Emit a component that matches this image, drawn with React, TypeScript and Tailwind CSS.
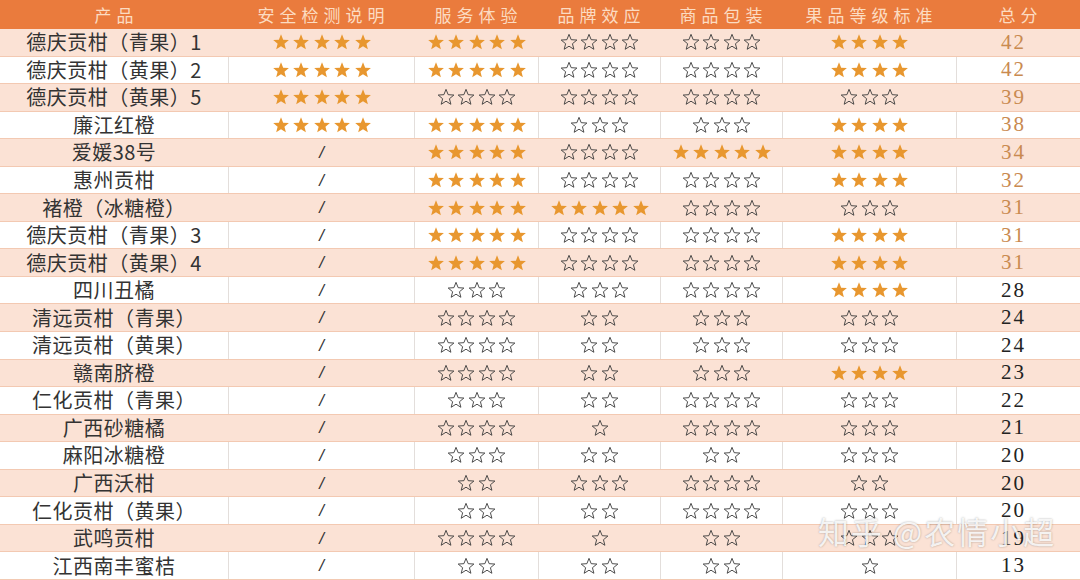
import type { ReactNode } from "react";

type Rating = number | "-";

interface Row {
  name: string;
  safety: Rating;
  service: [number, boolean];
  brand: [number, boolean];
  pack: [number, boolean];
  grade: [number, boolean];
  total: number;
}

// [count, filled]
const rows: Row[] = [
  { name: "德庆贡柑（青果）1", safety: 5, service: [5, true], brand: [4, false], pack: [4, false], grade: [4, true], total: 42 },
  { name: "德庆贡柑（黄果）2", safety: 5, service: [5, true], brand: [4, false], pack: [4, false], grade: [4, true], total: 42 },
  { name: "德庆贡柑（黄果）5", safety: 5, service: [4, false], brand: [4, false], pack: [4, false], grade: [3, false], total: 39 },
  { name: "廉江红橙", safety: 5, service: [5, true], brand: [3, false], pack: [3, false], grade: [4, true], total: 38 },
  { name: "爱媛38号", safety: "-", service: [5, true], brand: [4, false], pack: [5, true], grade: [4, true], total: 34 },
  { name: "惠州贡柑", safety: "-", service: [5, true], brand: [4, false], pack: [4, false], grade: [4, true], total: 32 },
  { name: "褚橙（冰糖橙）", safety: "-", service: [5, true], brand: [5, true], pack: [4, false], grade: [3, false], total: 31 },
  { name: "德庆贡柑（青果）3", safety: "-", service: [5, true], brand: [4, false], pack: [4, false], grade: [4, true], total: 31 },
  { name: "德庆贡柑（黄果）4", safety: "-", service: [5, true], brand: [4, false], pack: [4, false], grade: [4, true], total: 31 },
  { name: "四川丑橘", safety: "-", service: [3, false], brand: [3, false], pack: [4, false], grade: [4, true], total: 28 },
  { name: "清远贡柑（青果）", safety: "-", service: [4, false], brand: [2, false], pack: [3, false], grade: [3, false], total: 24 },
  { name: "清远贡柑（黄果）", safety: "-", service: [4, false], brand: [2, false], pack: [3, false], grade: [3, false], total: 24 },
  { name: "赣南脐橙", safety: "-", service: [4, false], brand: [2, false], pack: [3, false], grade: [4, true], total: 23 },
  { name: "仁化贡柑（青果）", safety: "-", service: [3, false], brand: [2, false], pack: [4, false], grade: [3, false], total: 22 },
  { name: "广西砂糖橘", safety: "-", service: [4, false], brand: [1, false], pack: [4, false], grade: [3, false], total: 21 },
  { name: "麻阳冰糖橙", safety: "-", service: [3, false], brand: [2, false], pack: [2, false], grade: [3, false], total: 20 },
  { name: "广西沃柑", safety: "-", service: [2, false], brand: [3, false], pack: [4, false], grade: [2, false], total: 20 },
  { name: "仁化贡柑（黄果）", safety: "-", service: [2, false], brand: [2, false], pack: [4, false], grade: [3, false], total: 20 },
  { name: "武鸣贡柑", safety: "-", service: [4, false], brand: [1, false], pack: [2, false], grade: [3, false], total: 19 },
  { name: "江西南丰蜜桔", safety: "-", service: [2, false], brand: [2, false], pack: [2, false], grade: [1, false], total: 13 },
];

const headers = ["产品", "安全检测说明", "服务体验", "品牌效应", "商品包装", "果品等级标准", "总分"];

const STAR = "M12 1.8l2.9 7.1 7.6.5-5.9 4.9 1.9 7.4L12 17.6l-6.4 4.1 1.9-7.4L1.6 9.4l7.6-.5z";

function Star({ filled }: { filled: boolean }) {
  return filled ? (
    <svg width="18" height="18" viewBox="0 0 24 24">
      <path d={STAR} fill="#e8972f" />
    </svg>
  ) : (
    <svg width="18" height="18" viewBox="0 0 24 24">
      <path d={STAR} fill="none" stroke="#3a3a3a" strokeWidth="1.2" strokeLinejoin="miter" />
    </svg>
  );
}

function Stars({ n, filled }: { n: number; filled: boolean }) {
  return (
    <div className="flex items-center gap-[2.5px]">
      {Array.from({ length: n }).map((_, i) => (
        <Star key={i} filled={filled} />
      ))}
    </div>
  );
}

function Cell({ children, striped, first }: { children: ReactNode; striped: boolean; first?: boolean }) {
  return (
    <div
      className={`flex items-center justify-center h-full ${
        first ? "" : striped ? "border-l border-[#fbe2d5]" : "border-l border-[#e3dedb]"
      }`}
    >
      {children}
    </div>
  );
}

export default function App() {
  return (
    <div className="relative w-[1080px] h-[580px] bg-white overflow-hidden font-['Noto_Sans_CJK_SC','Noto_Sans',sans-serif]">
      <div className="grid grid-cols-[228px_186px_124px_122px_122px_174px_124px] h-[29px] bg-[#ea7b3d] text-[#fcdcc2] text-[17px] tracking-[5px]">
        {headers.map((h) => (
          <div key={h} className="flex items-center justify-center leading-none pl-[5px]">
            {h}
          </div>
        ))}
      </div>

      {rows.map((r, i) => {
        const striped = i % 2 === 0;
        const top = i < 9;
        return (
          <div
            key={r.name}
            className={`grid grid-cols-[228px_186px_124px_122px_122px_174px_124px] h-[27.55px] border-b border-[#f3c9b2] ${
              striped ? "bg-[#fbe2d5]" : "bg-white"
            }`}
          >
            <Cell striped={striped} first>
              <span className="text-[20px] text-[#333] leading-none tracking-[0.5px]">{r.name}</span>
            </Cell>
            <Cell striped={striped}>
              {r.safety === "-" ? (
                <span className="text-[17px] text-[#333] font-['Liberation_Sans',sans-serif] italic leading-none">/</span>
              ) : (
                <Stars n={r.safety} filled />
              )}
            </Cell>
            <Cell striped={striped}>
              <Stars n={r.service[0]} filled={r.service[1]} />
            </Cell>
            <Cell striped={striped}>
              <Stars n={r.brand[0]} filled={r.brand[1]} />
            </Cell>
            <Cell striped={striped}>
              <Stars n={r.pack[0]} filled={r.pack[1]} />
            </Cell>
            <Cell striped={striped}>
              <Stars n={r.grade[0]} filled={r.grade[1]} />
            </Cell>
            <Cell striped={striped}>
              <span
                className={`text-[21px] leading-none tracking-[2px] pr-[10px] font-['Liberation_Serif',serif] ${
                  top ? "text-[#c98a50]" : "text-[#222]"
                }`}
              >
                {r.total}
              </span>
            </Cell>
          </div>
        );
      })}

      <div className="absolute left-[818px] top-[515px] text-[31px] text-white/85 tracking-[2px] leading-none [text-shadow:0_0_2px_rgba(0,0,0,0.35)]">
        知乎 @农情小超
      </div>
    </div>
  );
}
